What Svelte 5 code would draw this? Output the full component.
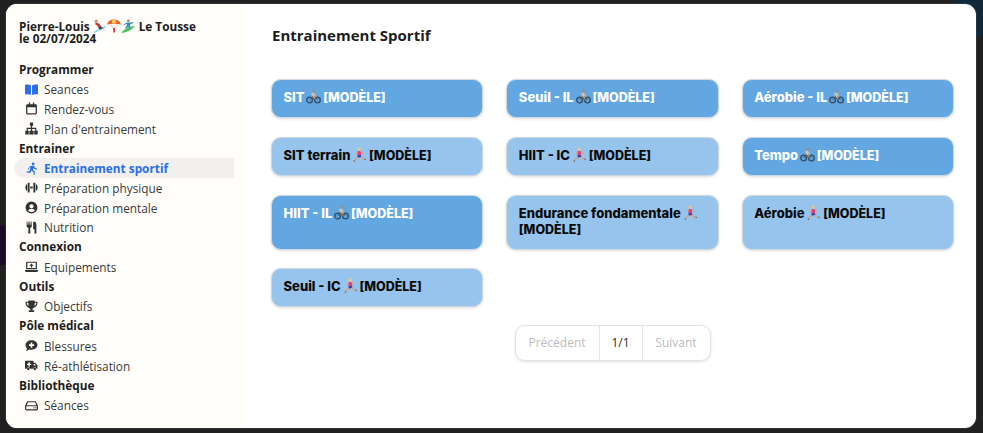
<script lang="ts">
	const menu = [
		{ title: 'Programmer', items: [
			{ label: 'Seances', icon: 'book', blue: true },
			{ label: 'Rendez-vous', icon: 'calendar' },
			{ label: "Plan d'entrainement", icon: 'sitemap' }
		] },
		{ title: 'Entrainer', items: [
			{ label: 'Entrainement sportif', icon: 'run', active: true, blue: true },
			{ label: 'Préparation physique', icon: 'dumbbell' },
			{ label: 'Préparation mentale', icon: 'user' },
			{ label: 'Nutrition', icon: 'utensils' }
		] },
		{ title: 'Connexion', items: [{ label: 'Equipements', icon: 'laptop' }] },
		{ title: 'Outils', items: [{ label: 'Objectifs', icon: 'trophy' }] },
		{ title: 'Pôle médical', items: [
			{ label: 'Blessures', icon: 'comment' },
			{ label: 'Ré-athlétisation', icon: 'truck' }
		] },
		{ title: 'Bibliothèque', items: [{ label: 'Séances', icon: 'drive' }] }
	];

	const cards = [
		{ name: 'SIT', sport: 'bike', dark: true },
		{ name: 'Seuil - IL', sport: 'bike', dark: true },
		{ name: 'Aérobie - IL', sport: 'bike', dark: true },
		{ name: 'SIT terrain', sport: 'runner' },
		{ name: 'HIIT - IC', sport: 'runner' },
		{ name: 'Tempo', sport: 'bike', dark: true },
		{ name: 'HIIT - IL', sport: 'bike', dark: true },
		{ name: 'Endurance fondamentale', sport: 'runner' },
		{ name: 'Aérobie', sport: 'runner' },
		{ name: 'Seuil - IC', sport: 'runner' }
	];
</script>

{#snippet navIcon(name: string, blue?: boolean)}
	<svg class="nav-icon" class:blue viewBox="0 0 24 24" fill="currentColor" aria-hidden="true">
		{#if name === 'book'}
			<path d="M11 4.500C9 3 5 2.500 0 3v18c4.500-.6 8.500-.2 11 1.300zM13 4.500c2-1.500 6-2 11-1.500v18c-4.500-.6-8.500-.2-11 1.300z" />
		{:else if name === 'calendar'}
			<path d="M7 1h2.400v3h5.200V1H17v3h2.500A2.500 2.500 0 0 1 22 6.500v14a2.500 2.500 0 0 1-2.500 2.500h-15A2.500 2.500 0 0 1 2 20.500v-14A2.500 2.500 0 0 1 4.500 4H7zM4.400 9.500v10.700c0 .2.100.4.400.4h14.400c.3 0 .4-.2.400-.4V9.500z" />
		{:else if name === 'sitemap'}
			<path d="M9 1h6v6h-1.800v3.500H21V16h2.500v7h-6.500v-7h1.800v-3.200h-5.600V16H16v7H8v-7h2.800v-3.200H5.200V16H7v7H.5v-7H3v-5.500h7.800V7H9z" />
		{:else if name === 'run'}
			<circle cx="15" cy="3.500" r="2.500" />
			<path d="M10 7.500l5-.8c1 0 1.800.5 2.200 1.300l1.500 3 3.300 1.200-.8 2-4-1.500-1.300-2-1.400 4 3.500 3v6h-2.300v-5l-3.800-3-1.700 4H3v-2.300h4.700l3-7.500-2.300.8-1.500 3-2-1z" />
		{:else if name === 'dumbbell'}
			<path d="M5 3h3.500v18H5zM9.700 10.200h4.600v3.600H9.700zM15.500 3H19v18h-3.500zM1.500 6.500H4v11H1.500zM20 6.500h2.500v11H20zM0 10.200h1v3.600H0zM23 10.200h1v3.600h-1z" />
		{:else if name === 'user'}
			<path fill-rule="evenodd" d="M12 1a11 11 0 1 0 0 22 11 11 0 0 0 0-22zm0 5a3.900 3.900 0 1 1 0 7.800A3.900 3.900 0 0 1 12 6zm0 14.500a8.500 8.500 0 0 1-6.400-2.900c.8-1.700 2.500-2.800 4.400-2.800h4c1.900 0 3.600 1.100 4.400 2.800a8.500 8.500 0 0 1-6.400 2.900z" />
		{:else if name === 'utensils'}
			<path d="M3 1h1.500l.4 6h1.300l.4-6h1.800l.4 6h1.300l.4-6h1.500l.5 8c0 2-1.300 3.300-3 3.800L10 23H6l.5-10.200C4.800 12.300 3 11 3 9zM16 1c3 0 5 2 5 6v16h-3.500v-8H15V6c0-2.500.3-5 1-5z" />
		{:else if name === 'laptop'}
			<path fill-rule="evenodd" d="M4 3h16a2 2 0 0 1 2 2v12H2V5a2 2 0 0 1 2-2zm.3 2.300v9.400h15.400V5.300zM0 18.500h24V20a2 2 0 0 1-2 2H2a2 2 0 0 1-2-2zM12 6.500l4 4h-2.800V14h-2.400v-3.500H8z" />
		{:else if name === 'trophy'}
			<path fill-rule="evenodd" d="M6 1h12v2h5v3c0 4-3 7-6.500 7.800-.6.900-1.400 1.700-2.500 2.100V19h3v3H7v-3h3v-2.100c-1.100-.4-1.900-1.200-2.500-2.100C4 13 1 10 1 6V3h5zM3.300 5.300V6c0 2.200 1.500 4 3.400 5C6.200 9.300 6 7.300 6 5.300zm17.400 0H18c0 2-.2 4-.7 5.700 1.900-1 3.400-2.800 3.400-5z" />
		{:else if name === 'comment'}
			<path fill-rule="evenodd" d="M12 2.500c6.100 0 11 3.900 11 8.800s-4.900 8.700-11 8.700c-1.500 0-3-.2-4.300-.7C6 20.700 3.700 22 1.500 22c1-1.100 2-2.800 2.300-4.400C2 16 1 13.800 1 11.300c0-4.900 4.900-8.800 11-8.800zM10.500 6.500v3.300H7.300v3h3.200v3.200h3v-3.200h3.200v-3h-3.200V6.500z" />
		{:else if name === 'truck'}
			<path fill-rule="evenodd" d="M2 3h12a2 2 0 0 1 2 2v2h3l4 4.500V18h-2a3 3 0 0 0-6 0H9a3 3 0 0 0-6 0H0V5a2 2 0 0 1 2-2zm4.300 3v2.700H3.700v2.600h2.600V14h2.600v-2.700h2.600V8.700H8.900V6zM16 9v3h4.500L18 9zM6 16a2.300 2.300 0 1 1 0 4.600A2.300 2.300 0 0 1 6 16zm12 0a2.300 2.300 0 1 1 0 4.600 2.300 2.300 0 0 1 0-4.600z" />
		{:else if name === 'drive'}
			<path fill-rule="evenodd" d="M5.500 4h13c1 0 1.800.5 2.200 1.400L24 13v5a3 3 0 0 1-3 3H3a3 3 0 0 1-3-3v-5l3.300-7.600C3.700 4.500 4.500 4 5.500 4zm0 2.200L3.200 11.500c0 0 .3-.1.800-.1h16c.5 0 .8.100.8.100l-2.300-5.300zM3 13.600c-.5 0-.8.300-.8.800v3.400c0 .5.300.9.800.9h18c.5 0 .8-.4.800-.9v-3.400c0-.5-.3-.8-.8-.8zM16.500 15a1.300 1.300 0 1 1 0 2.600 1.300 1.300 0 0 1 0-2.600zm3.500 0a1.300 1.300 0 1 1 0 2.600 1.300 1.300 0 0 1 0-2.600z" />
		{/if}
	</svg>
{/snippet}

{#snippet sportIcon(kind: string)}
	<svg class="emoji" viewBox="0 0 16 16" aria-hidden="true">
		{#if kind === 'bike'}
			<circle cx="3.800" cy="11.800" r="3" fill="none" stroke="#35506a" stroke-width="1.500" />
			<circle cx="12.200" cy="11.800" r="3" fill="none" stroke="#35506a" stroke-width="1.500" />
			<path d="M3.800 11.800 7 8l3.500 1 1.700 2.800M7 8l1.500 3.800" fill="none" stroke="#3c5a72" stroke-width="1" />
			<path d="M5 5 8 3.500l2.500 3-.3 2.700-2.600-.7L6.200 6.500z" fill="#d3c3ae" />
			<circle cx="8.300" cy="2" r="1.700" fill="#8d949a" />
			<path d="M9.700 7l-1.200 4.300" stroke="#b88a5e" stroke-width="1.400" />
		{:else if kind === 'runner'}
			<circle cx="7.500" cy="2.200" r="1.700" fill="#ecc77a" />
			<path d="M6 4.200h3l.9 3.300-.8 1.800H5.800z" fill="#e5397a" />
			<path d="M5.800 8.800h3.500l1 1.700-4 1z" fill="#3d3a98" />
			<path d="M6.500 11 3.800 12.600 2.800 15M9.600 10.300l2.600 2.700 1.600.3" fill="none" stroke="#d79f7a" stroke-width="1.400" />
			<path d="M1.300 14.200l2.200.8-.8 1zM13 12.300l1.700.5-.5 1.500z" fill="#3f4850" />
			<path d="M9.200 4.500l2.600 2.600M6.200 4.500 4.600 7.300" stroke="#d79f7a" stroke-width="1.100" />
		{:else if kind === 'skier'}
			<path d="M1 15.500 14.500 8.500" stroke="#8fd3ee" stroke-width="1.800" />
			<circle cx="4" cy="2.300" r="1.700" fill="#d99a6c" />
			<path d="M3 4l4.500 1.500L9.500 9l-3 1.800-1.500-3.200L2.500 6z" fill="#d9372d" />
			<path d="M6 9.800l3.400-1.300 1.800 2-3.400 1.700z" fill="#2f4a6a" />
			<path d="M1 2l12 10" stroke="#4a535c" stroke-width=".5" />
		{:else if kind === 'chute'}
			<path d="M0 6.500C1 2 4.500 .5 8 .5s7 1.500 8 6c-1.700-1-3-.9-4-.4-1-.8-2.800-.9-4-.3-1.200-.6-3-.5-4 .3C3 5.600 1.700 5.500 0 6.500z" fill="#ee5f2e" />
			<path d="M5.300 1.800C6.500 1 9.500 1 10.700 1.800L9.700 5.200H6.300z" fill="#f6cf55" />
			<path d="M1 6l6.300 5M15 6l-6.300 5M4.500 5.600 7.500 11M11.500 5.600 8.500 11" stroke="#999" stroke-width=".35" />
			<path d="M7 10.300h2l.2 5.200H7.300z" fill="#c8342b" />
		{:else if kind === 'surf'}
			<path d="M0 15.500c3.500 1 10-1.200 16-7.500-4.500-.3-12 3-16 7.500z" fill="#4fc364" />
			<circle cx="8.500" cy="2.200" r="1.700" fill="#b98c63" />
			<path d="M7 4l3 .2 3.800-1.200.4 1.200-3.700 2.200-.5 2 1.700 2.600-1.300.8L8.200 8.800 5.800 11.500l-1.100-.9 2.100-3.500-.5-1.500-2.900 1.300-.5-1z" fill="#2f94b4" />
		{/if}
	</svg>
{/snippet}

<div class="page">
	<div class="backdrop-blob"></div>
	<div class="backdrop-bar"></div>

	<div class="modal">
		<aside class="sidebar">
			<div class="athlete">
				<div class="athlete-line">
					<span>Pierre-Louis</span>
					<span class="emojis">{@render sportIcon('skier')}{@render sportIcon('chute')}{@render sportIcon('surf')}</span>
					<span>Le Tousse</span>
				</div>
				<div>le 02/07/2024</div>
			</div>

			<nav>
				{#each menu as group}
					<div class="group-title">{group.title}</div>
					{#each group.items as item}
						<div class="nav-item" class:active={item.active}>
							{@render navIcon(item.icon, item.blue)}
							<span>{item.label}</span>
						</div>
					{/each}
				{/each}
			</nav>
		</aside>

		<main class="content">
			<h1>Entrainement Sportif</h1>

			<div class="grid">
				{#each cards as card}
					<div class="card" class:dark={card.dark}>
						{card.name} {@render sportIcon(card.sport)} <span class="tag">[MODÈLE]</span>
					</div>
				{/each}
			</div>

			<div class="pagination">
				<span class="muted prev">Précédent</span>
				<span class="current">1/1</span>
				<span class="muted next">Suivant</span>
			</div>
		</main>
	</div>
</div>

<style>
	:global(body) {
		margin: 0;
		background: #202020;
	}

	.page {
		position: relative;
		height: 433px;
		padding: 4px 7px 5px 6px;
		box-sizing: border-box;
		overflow: hidden;
		background: #202020;
		font-family: 'Open Sans', sans-serif;
	}

	.backdrop-blob {
		position: absolute;
		left: -20px;
		top: 225px;
		width: 40px;
		height: 40px;
		border-radius: 50%;
		background: #1c0a26;
	}

	.backdrop-bar {
		position: absolute;
		right: 0;
		top: 0;
		width: 30px;
		height: 36px;
		background: #10283a;
	}

	.modal {
		position: relative;
		display: flex;
		height: 100%;
		border-radius: 11px;
		overflow: hidden;
		background: #fff;
		box-shadow: 0 0 0 1px rgba(255, 255, 255, 0.08);
	}

	.sidebar {
		width: 242px;
		flex: none;
		padding: 16px 14px 0 8px;
		box-sizing: border-box;
		background: #fffefa;
		color: #2b2b2b;
		font-size: 11.8px;
	}

	.athlete {
		padding-left: 5px;
		margin-bottom: 15.5px;
		font-weight: 700;
		line-height: 12px;
		color: #1d1d1d;
	}

	.athlete-line {
		display: flex;
		align-items: center;
		gap: 3px;
		height: 12px;
	}

	.emojis {
		display: flex;
		margin-right: 1px;
	}

	.emojis .emoji {
		width: 14px;
		height: 14px;
		margin: 0;
		vertical-align: 0;
	}

	.group-title {
		height: 19.75px;
		line-height: 19.75px;
		padding-left: 5px;
		font-weight: 700;
		color: #1d1d1d;
	}

	.nav-item {
		display: flex;
		align-items: center;
		height: 19.75px;
		padding-left: 11px;
		gap: 6px;
		color: #3a3a3a;
		border-radius: 10px 0 0 10px;
	}

	.nav-item.active {
		background: #f1f0ec;
		color: #2a6fe8;
		font-weight: 700;
	}

	.nav-icon {
		width: 13px;
		height: 13px;
		flex: none;
		color: #333;
	}

	.nav-icon.blue {
		color: #2a6fe8;
	}

	.content {
		flex: 1;
		min-width: 0;
		padding: 21px 22px 0 23px;
	}

	h1 {
		margin: 0 0 34px 1px;
		font-size: 15px;
		line-height: 20px;
		font-weight: 700;
		color: #1d1d1d;
	}

	.grid {
		display: grid;
		grid-template-columns: repeat(3, 1fr);
		gap: 18.8px 23px;
		align-items: stretch;
	}

	.card {
		min-height: 39px;
		padding: 9px 11.5px 12px;
		box-sizing: border-box;
		border: 1px solid #cfd8e1;
		border-radius: 10px;
		background: #97c4ec;
		box-shadow: 0 1px 3px rgba(0, 0, 0, 0.14);
		color: #0b0b0b;
		font-family: Inter, sans-serif;
		font-size: 13px;
		line-height: 16px;
		font-weight: 800;
	}

	.card.dark {
		background: #62a6e2;
		color: #fff;
	}

	.tag {
		font-size: 12.5px;
		line-height: 1;
	}

	.emoji {
		width: 15px;
		height: 15px;
		margin: -3px -1px -2px;
		vertical-align: 0;
	}

	.pagination {
		display: flex;
		width: fit-content;
		height: 36px;
		box-sizing: border-box;
		margin: 17.5px auto 0;
		border: 1px solid #e3e3e3;
		border-radius: 10px;
		box-shadow: 0 1px 3px rgba(0, 0, 0, 0.12);
		font-size: 12px;
		line-height: 34px;
		color: #2b2b2b;
		background: #fff;
	}

	.pagination span {
		text-align: center;
		box-sizing: border-box;
	}

	.muted {
		color: #bcbcbc;
	}

	.prev {
		width: 83px;
	}

	.current {
		width: 44px;
		border-left: 1px solid #e6e6e6;
		border-right: 1px solid #e6e6e6;
	}

	.next {
		width: 67px;
	}
</style>
